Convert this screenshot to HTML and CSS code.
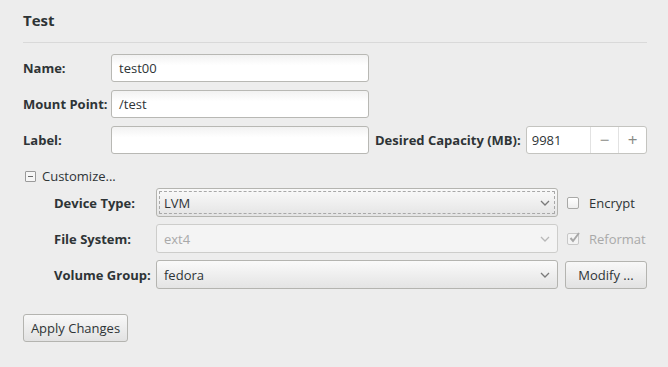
FILE: index.html
```html
<!DOCTYPE html>
<html>
<head>
<meta charset="utf-8">
<link rel="stylesheet" href="styles.css">
</head>
<body>
<div class="page">
  <div class="title">Test</div>
  <div class="grid">
    <label class="lbl">Name:</label>
    <div class="entry">test00</div>
    <div></div><div></div>
    <label class="lbl">Mount Point:</label>
    <div class="entry">/test</div>
    <div></div><div></div>
    <label class="lbl">Label:</label>
    <div class="entry"></div>
    <label class="lbl cap">Desired Capacity (MB):</label>
    <div class="spin">
      <span class="spin-val">9981</span>
      <span class="spin-btn">−</span>
      <span class="spin-btn">+</span>
    </div>
  </div>
  <div class="expander">
    <span class="exp-icon"></span>
    <span>Customize...</span>
  </div>
  <div class="custom">
    <label class="lbl">Device Type:</label>
    <div class="combo focus"><span>LVM</span><svg class="chev" width="10" height="6" viewBox="0 0 10 6"><path d="M1 1 L5 5 L9 1" fill="none" stroke="#7a7a7a" stroke-width="1.3"/></svg></div>
    <div class="check"><span class="box"></span><span>Encrypt</span></div>
    <label class="lbl">File System:</label>
    <div class="combo disabled"><span>ext4</span><svg class="chev" width="10" height="6" viewBox="0 0 10 6"><path d="M1 1 L5 5 L9 1" fill="none" stroke="#b8b8b8" stroke-width="1.3"/></svg></div>
    <div class="check dis"><span class="box checked"><svg width="12" height="12" viewBox="0 0 12 12"><path d="M2.5 6 L5 9 L11 1" fill="none" stroke="#a8a8a8" stroke-width="2"/></svg></span><span>Reformat</span></div>
    <label class="lbl">Volume Group:</label>
    <div class="combo"><span>fedora</span><svg class="chev" width="10" height="6" viewBox="0 0 10 6"><path d="M1 1 L5 5 L9 1" fill="none" stroke="#7a7a7a" stroke-width="1.3"/></svg></div>
    <div class="side"><button class="btn modify">Modify ...</button></div>
  </div>
  <div class="actions">
    <button class="btn apply">Apply Changes</button>
  </div>
</div>
</body>
</html>
```
FILE: styles.css
```css
html, body {
  margin: 0;
  padding: 0;
  background: #ededed;
}
body {
  font-family: "Open Sans", "DejaVu Sans", sans-serif;
  font-size: 13px;
  color: #2e3436;
  width: 668px;
  height: 367px;
  overflow: hidden;
}
.page {
  padding: 0 21px 0 23px;
}
.title {
  font-weight: bold;
  font-size: 15px;
  height: 42px;
  line-height: 40px;
  border-bottom: 1px solid #d9d9d9;
  box-sizing: content-box;
}
.grid {
  margin-top: 11px;
  display: grid;
  grid-template-columns: 88px 258px auto 1fr;
  row-gap: 8px;
  align-items: center;
}
.lbl {
  font-weight: bold;
  font-size: 13px;
  color: #2e3436;
}
.cap {
  padding-left: 6px;
}
.entry {
  height: 28px;
  box-sizing: border-box;
  border: 1px solid #b8b8b4;
  border-radius: 3px;
  background: linear-gradient(#f2f2f2, #ffffff 40%, #ffffff);
  padding: 0 7px;
  line-height: 26px;
  font-size: 13px;
}
.spin {
  height: 28px;
  box-sizing: border-box;
  border: 1px solid #c4c4c0;
  border-radius: 3px;
  background: #ffffff;
  display: flex;
  margin-left: 5px;
}
.spin-val {
  flex: 1;
  padding-left: 5px;
  line-height: 26px;
}
.spin-btn {
  width: 27px;
  border-left: 1px solid #e2e2e2;
  text-align: center;
  line-height: 25px;
  color: #888a85;
  font-size: 17px;
}
.expander {
  display: flex;
  align-items: center;
  gap: 6px;
  margin-top: 16px;
  margin-left: 2px;
  height: 12px;
}
.exp-icon {
  width: 9px;
  height: 9px;
  border: 1px solid #9a9a9a;
  border-radius: 1px;
  position: relative;
  background: #f6f6f6;
}
.exp-icon::after {
  content: "";
  position: absolute;
  left: 2px;
  right: 2px;
  top: 4px;
  height: 1px;
  background: #6a6a6a;
}
.custom {
  margin-top: 6px;
  margin-left: 31px;
  display: grid;
  grid-template-columns: 102px 402px 1fr;
  row-gap: 7px;
  align-items: center;
}
.combo {
  height: 29px;
  box-sizing: border-box;
  border: 1px solid #b4b4b0;
  border-radius: 3px;
  background: linear-gradient(#fafafa, #e4e4e4);
  display: flex;
  align-items: center;
  justify-content: space-between;
  padding: 0 6px 0 7px;
  position: relative;
}
.combo.focus::before {
  content: "";
  position: absolute;
  inset: 2px;
  border: 1px dashed #a8a8a8;
  border-radius: 1px;
}
.combo.disabled {
  background: #f4f4f4;
  border-color: #cdcdcb;
  color: #a9a9a9;
}
.chev {
  margin-right: 1px;
}
.check {
  display: flex;
  align-items: center;
  gap: 10px;
  padding-left: 9px;
}
.side {
  padding-left: 7px;
}
.box {
  width: 12px;
  height: 12px;
  box-sizing: border-box;
  border: 1px solid #a9a9a7;
  border-radius: 2px;
  background: linear-gradient(#ffffff, #eeeeee);
  position: relative;
}
.box svg {
  position: absolute;
  left: 0;
  top: -2px;
}
.check.dis {
  color: #a9a9a9;
}
.check.dis .box {
  border-color: #c8c8c8;
  background: #f4f4f4;
}
.btn {
  font-family: "Open Sans", "DejaVu Sans", sans-serif;
  font-size: 13px;
  color: #2e3436;
  height: 28px;
  border: 1px solid #b4b4b0;
  border-radius: 3px;
  background: linear-gradient(#f8f8f8, #e2e2e2);
  padding: 0 4px;
  white-space: nowrap;
}
.modify {
  width: 82px;
}
.actions {
  margin-top: 25px;
}
.apply {
  width: 105px;
}
```
